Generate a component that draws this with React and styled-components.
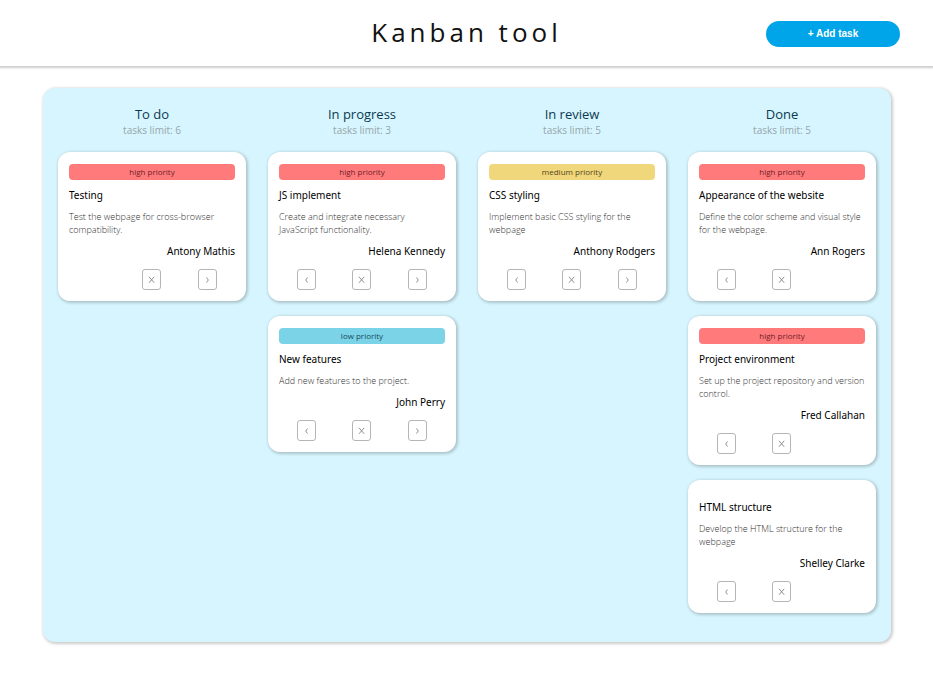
import React from "react";
import styled, { createGlobalStyle } from "styled-components";

const GlobalStyle = createGlobalStyle`
  *, *::before, *::after { box-sizing: border-box; }
  body {
    margin: 0;
    background: #fff;
    color: #000;
    font-family: "Open Sans", "Noto Sans", sans-serif;
  }
  h1, h2, h3, p { margin: 0; font-weight: 400; }
`;

const Header = styled.header`
  display: grid;
  grid-template-columns: 1fr auto 1fr;
  align-items: center;
  min-height: 66px;
  padding: 0 33px;
  box-shadow: 0 1px 2px 1px rgba(0, 0, 0, 0.2);
`;

const Title = styled.h1`
  grid-column: 2;
  margin-bottom: 2px;
  color: #111;
  font-size: 26px;
  line-height: 34px;
  letter-spacing: 4px;
`;

const AddButton = styled.button`
  justify-self: end;
  width: 134px;
  height: 26px;
  margin-top: 2px;
  padding: 0;
  border: 0;
  border-radius: 13px;
  background: #00a4e8;
  color: #fff;
  font: 700 10px/26px "Liberation Sans", Arial, sans-serif;
  cursor: pointer;
`;

const Board = styled.main`
  display: grid;
  grid-template-columns: repeat(4, minmax(0, 1fr));
  align-items: start;
  gap: 22px;
  margin: 22px 42px 30px 43px;
  padding: 17px 15px 29px;
  border-radius: 12px;
  background: #d7f5fe;
  box-shadow: 1px 1px 3px 1px rgba(0, 0, 0, 0.2);
`;

const Column = styled.section`
  display: flex;
  flex-direction: column;
  gap: 15px;
`;

const ColumnHeader = styled.header`
  text-align: center;
`;

const ColumnTitle = styled.h2`
  color: #0b3a52;
  font-size: 13px;
  line-height: 18px;
`;

const Limit = styled.p`
  color: #95a5ab;
  font-size: 10px;
  line-height: 15px;
  margin-bottom: -1px;
`;

const Card = styled.article`
  display: flex;
  flex-direction: column;
  gap: 7px;
  padding: 12px 11px 11px;
  border-radius: 12px;
  background: #fff;
  box-shadow: 1px 1px 3px 1px rgba(0, 0, 0, 0.2);
`;

const badgeColors = { high: "#ff7b7b", medium: "#f0d77b", low: "#7bd3e8" };
const badgeInks = { high: "#6d2029", medium: "#54451c", low: "#174a59" };

const Badge = styled.p`
  min-height: ${({ $level }) => ($level ? "16px" : "0")};
  border-radius: 4px;
  background: ${({ $level }) => badgeColors[$level] || "transparent"};
  color: ${({ $level }) => badgeInks[$level] || "inherit"};
  font-size: 8px;
  line-height: 16px;
  text-align: center;
`;

const TaskTitle = styled.h3`
  font-family: "Noto Sans", "Open Sans", sans-serif;
  font-size: 10px;
  line-height: 16px;
`;

const Description = styled.p`
  color: #333;
  font-size: 9px;
  font-weight: 300;
  line-height: 13px;
`;

const Assignee = styled.p`
  font-family: "Noto Sans", "Open Sans", sans-serif;
  font-size: 10px;
  line-height: 16px;
  text-align: right;
`;

const Actions = styled.div`
  display: grid;
  grid-template-columns: repeat(3, 1fr);
  justify-items: center;
  margin-top: 3px;
`;

const ActionButton = styled.button`
  grid-column: ${({ $slot }) => $slot};
  grid-row: 1;
  display: grid;
  place-items: center;
  width: 19px;
  height: 21px;
  padding: 0;
  border: 1px solid #b5b5b5;
  border-radius: 3px;
  background: #fff;
  color: #8f8f8f;
  cursor: pointer;
`;

const Glyph = styled.svg`
  width: 9px;
  height: 9px;
  fill: none;
  stroke: currentColor;
`;

const actions = {
  back: { slot: 1, label: "Move back", path: "M5.5 2.5 L3.7 5 L5.5 7.5" },
  remove: { slot: 2, label: "Delete", path: "M2 1.8 L7.2 7.8 M7.2 1.8 L2 7.8" },
  forward: { slot: 3, label: "Move forward", path: "M3.5 2.5 L5.3 5 L3.5 7.5" },
};

const columns = [
  {
    name: "To do",
    limit: 6,
    actions: ["remove", "forward"],
    tasks: [
      { level: "high", title: "Testing", text: "Test the webpage for cross-browser compatibility.", who: "Antony Mathis" },
    ],
  },
  {
    name: "In progress",
    limit: 3,
    actions: ["back", "remove", "forward"],
    tasks: [
      { level: "high", title: "JS implement", text: "Create and integrate necessary JavaScript functionality.", who: "Helena Kennedy" },
      { level: "low", title: "New features", text: "Add new features to the project.", who: "John Perry" },
    ],
  },
  {
    name: "In review",
    limit: 5,
    actions: ["back", "remove", "forward"],
    tasks: [
      { level: "medium", title: "CSS styling", text: "Implement basic CSS styling for the webpage", who: "Anthony Rodgers" },
    ],
  },
  {
    name: "Done",
    limit: 5,
    actions: ["back", "remove"],
    tasks: [
      { level: "high", title: "Appearance of the website", text: "Define the color scheme and visual style for the webpage.", who: "Ann Rogers" },
      { level: "high", title: "Project environment", text: "Set up the project repository and version control.", who: "Fred Callahan" },
      { level: "", title: "HTML structure", text: "Develop the HTML structure for the webpage", who: "Shelley Clarke" },
    ],
  },
];

function Task({ task, actionNames }) {
  return (
    <Card>
      <Badge $level={task.level}>{task.level && `${task.level} priority`}</Badge>
      <TaskTitle>{task.title}</TaskTitle>
      <Description>{task.text}</Description>
      <Assignee>{task.who}</Assignee>
      <Actions>
        {actionNames.map((name) => (
          <ActionButton key={name} type="button" $slot={actions[name].slot} aria-label={actions[name].label}>
            <Glyph viewBox="0 0 9 9" aria-hidden="true">
              <path d={actions[name].path} />
            </Glyph>
          </ActionButton>
        ))}
      </Actions>
    </Card>
  );
}

export default function App() {
  return (
    <>
      <GlobalStyle />
      <Header>
        <Title>Kanban tool</Title>
        <AddButton type="button">+ Add task</AddButton>
      </Header>
      <Board>
        {columns.map((column) => (
          <Column key={column.name}>
            <ColumnHeader>
              <ColumnTitle>{column.name}</ColumnTitle>
              <Limit>tasks limit: {column.limit}</Limit>
            </ColumnHeader>
            {column.tasks.map((task) => (
              <Task key={task.title} task={task} actionNames={column.actions} />
            ))}
          </Column>
        ))}
      </Board>
    </>
  );
}
